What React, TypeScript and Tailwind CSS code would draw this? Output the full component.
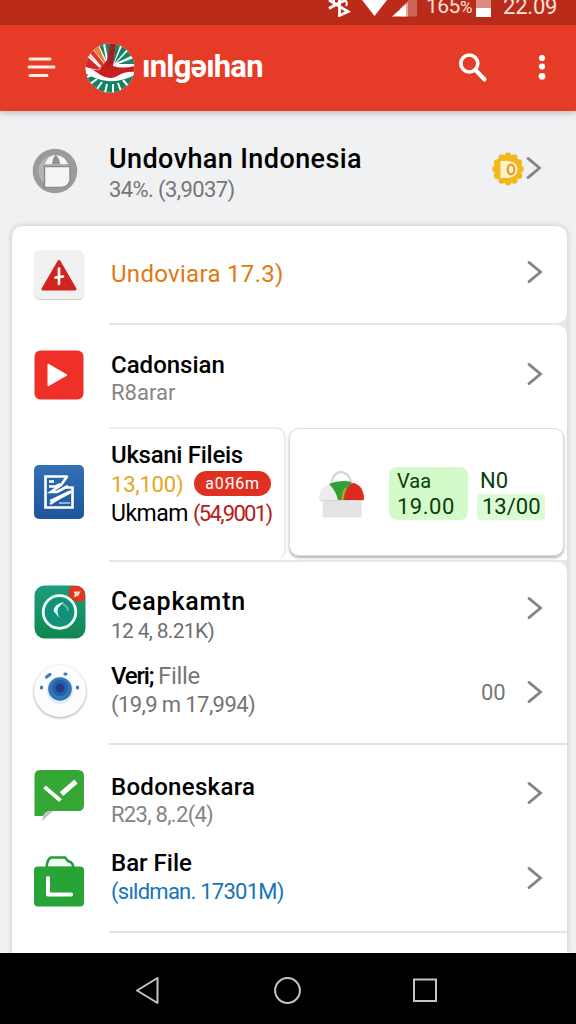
import React from 'react';

const Chevron: React.FC<{ className?: string }> = ({ className = '' }) => (
  <svg
    className={`w-4 h-6 shrink-0 ${className}`}
    viewBox="0 0 16 24"
    fill="none"
    stroke="#858585"
    strokeWidth="2.8"
    strokeLinecap="round"
    strokeLinejoin="miter"
  >
    <path d="M2 2.4 L13.5 12 L2 21.6" />
  </svg>
);

const StatusBar: React.FC = () => (
  <div className="h-[25px] shrink-0 bg-[#bb2b19] overflow-hidden flex items-start pl-[328px] text-[#fbe3dd]">
    <svg className="w-[89px] h-[17px] shrink-0" viewBox="0 0 89 17">
      <path
        d="M1 0 L20 11.500 L11.500 15.500 V0 M1 8.500 L9 4 L18 0"
        fill="none"
        stroke="#fff"
        strokeWidth="2.8"
      />
      <path d="M6 0 V7 M17 0 Q20 3 18 6" fill="none" stroke="#fff" strokeWidth="2" />
      <path d="M34 0 H59 L46.500 16 Z" fill="#fff" />
      <path d="M72 8 L81 0 H89 V16.500 H72 Z" fill="#cf6558" />
      <path d="M64 16.500 L78 4 V16.500 Z" fill="#fff" />
      <path d="M78 4 L80 2 V16.500 H78 Z" fill="#e6a79e" />
    </svg>
    <span className="ml-[9px] -mt-[6px] w-[50px] text-[21px] leading-6 tracking-[-0.5px] whitespace-nowrap">
      165<span className="text-[17px] tracking-[-1px]">%</span>
    </span>
    <span className="w-[15px] h-[17px] bg-[#dc8c80] flex items-end">
      <span className="w-full h-[9px] bg-white" />
    </span>
    <span className="ml-3 -mt-[5px] text-[22px] leading-6 tracking-[-0.2px]">22.09</span>
  </div>
);

const BrandLogo: React.FC = () => (
  <svg className="w-[50px] h-[50px] shrink-0" viewBox="0 0 50 50">
    <defs>
      <clipPath id="brand">
        <circle cx="25" cy="25" r="24.500" />
      </clipPath>
    </defs>
    <g clipPath="url(#brand)">
      <rect width="50" height="50" fill="#fff" />
      <path d="M0 30 Q12 37 23 38 Q36 39 50 32 V50 H0 Z" fill="#168463" />
      <g fill="#168463">
        <path d="M28 22 L31 0 H36 Z" />
        <path d="M29 21 L38 1 L43 5 Z" />
        <path d="M31 20 L44 7 L48 12 Z" />
        <path d="M33 21 L49 15 L50 21 Z" />
        <path d="M23 16 L20 0 H26 Z" />
        <path d="M21 17 L14 2 L18 1 Z" />
      </g>
      <path d="M20 20 L9 6 L13 4 Z" fill="#ef7c38" stroke="#ef7c38" strokeWidth="1.500" />
      <path d="M17 24 L5 10 L8 7 L19 21 Z" fill="#dd3425" />
      <path d="M0 12 L3 11 L16 24 L13 27 L0 24 Z" fill="#d42a20" />
      <path d="M3 13 L15 24" stroke="#fff" strokeWidth="2" />
      <path
        d="M0 24 Q10 28 14 27 L22 17 L25 0 H31 L28 23 Q37 26 50 23 V29 Q38 31 32 35 Q20 39 11 31 L0 26 Z"
        fill="#c91e20"
      />
      <path d="M26 0 H31 L28 19 L22 24 Z" fill="#992224" />
      <path
        d="M-1 25 Q7 27 15 33 Q25 39 33 34 Q40 29 51 30"
        fill="none"
        stroke="#fff"
        strokeWidth="2.400"
      />
      <path
        d="M5 41 L12 36 M12 46 L17 39 M20 50 L22 41 M28 50 L28 41 M36 48 L33 40 M43 43 L38 37 M2 34 L7 32"
        fill="none"
        stroke="#fff"
        strokeWidth="2"
      />
    </g>
  </svg>
);

const AppBar: React.FC = () => (
  <header className="h-[86px] shrink-0 bg-[#e63b26] flex items-start pl-[27px] shadow-[0_2px_7px_rgba(90,90,100,0.35)] text-white">
    <svg
      className="mt-[31px] w-[29px] h-6 shrink-0"
      viewBox="0 0 29 24"
      stroke="#ffe9e3"
      strokeWidth="3"
      strokeLinecap="round"
    >
      <path d="M3 3 H23 M2 11 H27 M3 19.500 H20" />
    </svg>
    <div className="ml-[29px] mt-[18px]">
      <BrandLogo />
    </div>
    <span className="ml-[7px] mt-[26px] w-[130px] text-[31px] leading-8 font-bold tracking-[-0.8px] whitespace-nowrap">
      ınlgəıhan
    </span>
    <svg
      className="ml-[186px] mt-[28px] w-[30px] h-[30px] shrink-0"
      viewBox="0 0 30 30"
      fill="none"
      stroke="#fff"
    >
      <circle cx="11.300" cy="10.500" r="8.500" strokeWidth="3.600" />
      <path d="M17.500 17 L26.500 26.500" strokeWidth="4.200" strokeLinecap="round" />
    </svg>
    <svg className="ml-[50px] mt-[29px] w-2 h-7 shrink-0" viewBox="0 0 8 28" fill="#fff">
      <circle cx="4" cy="4" r="3.100" />
      <circle cx="4" cy="12.500" r="3.100" />
      <circle cx="4" cy="22.300" r="3.400" />
    </svg>
  </header>
);

const AccountIcon: React.FC = () => (
  <svg className="w-[46px] h-[46px]" viewBox="0 0 46 46">
    <circle cx="23" cy="23" r="22.300" fill="#9b9b9b" />
    <circle cx="22" cy="23" r="15.500" fill="#b4b4b4" />
    <path d="M13 16 Q16 7 24 7 Q33 8 36 16 Z" fill="#f5f5f5" />
    <path d="M20 16 Q21 8 24 7 Q28 11 28 16 Z" fill="#929292" />
    <path
      d="M12.500 18.500 H38 V33 Q36 39.500 29 39.500 H12.500 Z"
      fill="#f5f5f5"
      stroke="#8c8c8c"
      strokeWidth="1.500"
    />
  </svg>
);

const CoinIcon: React.FC = () => (
  <svg className="w-8 h-[34px]" viewBox="0 0 32 34">
    <g fill="#f3b81e">
      <circle cx="16" cy="17" r="14" />
      {Array.from({ length: 12 }, (_, i) => (
        <circle
          key={i}
          cx={16 + 12.6 * Math.sin((i * Math.PI) / 6)}
          cy={17 - 13.3 * Math.cos((i * Math.PI) / 6)}
          r="3.200"
        />
      ))}
    </g>
    <path d="M8.500 9 H16 Q25.500 10 25.500 17 Q25.500 25 16 26 H8.500 Z" fill="#fff3c5" />
    <ellipse cx="19" cy="17.500" rx="3.300" ry="4.800" fill="none" stroke="#e39b35" strokeWidth="2.200" />
  </svg>
);

const AlertIcon: React.FC = () => (
  <div className="w-[50px] h-[49px] rounded-md bg-[#f1f1f1] shadow-[0_1px_1px_#ccc] flex items-center justify-center">
    <svg className="w-[38px] h-8" viewBox="0 0 38 32">
      <path
        d="M19 2.500 L35 30 H3 Z"
        fill="#d02421"
        stroke="#d02421"
        strokeWidth="3"
        strokeLinejoin="round"
      />
      <path
        d="M19 9.500 V25 M15.500 18.500 L23 17.500"
        stroke="#fff"
        strokeWidth="2.700"
        strokeLinecap="round"
      />
    </svg>
  </div>
);

const PlayIcon: React.FC = () => (
  <svg className="w-[50px] h-[50px]" viewBox="0 0 50 50">
    <rect x="0.500" y="0.500" width="49" height="49" rx="6" fill="#ee3028" />
    <path d="M14 14 L33 25 L14 36 Z" fill="#fff" stroke="#fff" strokeLinejoin="round" />
  </svg>
);

const DocumentIcon: React.FC = () => (
  <svg className="w-[50px] h-[54px]" viewBox="0 0 50 54">
    <defs>
      <linearGradient id="doc" x2="0" y2="1">
        <stop stopColor="#326fb3" />
        <stop offset="1" stopColor="#1e559c" />
      </linearGradient>
    </defs>
    <rect width="50" height="54" rx="5" fill="url(#doc)" />
    <g fill="none" stroke="#fff">
      <path d="M33.500 11.500 H11.500 V42.500 H38.500 V22.500 H30" strokeWidth="2.600" />
      <path d="M33.500 11 L27 20 L17 27 H23 L34 21" strokeWidth="2.600" />
      <path d="M15 16.500 H20 M15 21.500 H21 M20 22 L26 19 M16 36 L37 26" strokeWidth="2.400" />
      <path d="M16 39 L24 34 L37 27" strokeWidth="2.400" />
      <path d="M25 38 H36" stroke="#b8d1ec" strokeWidth="1.500" />
    </g>
  </svg>
);

const BasketIcon: React.FC = () => (
  <svg className="w-12 h-12 shrink-0" viewBox="0 0 48 48">
    <path
      d="M13 13 Q16 2 23 2 Q31 3 33 12"
      fill="none"
      stroke="#d8d8d8"
      strokeWidth="2.500"
    />
    <path d="M1 30 Q1 16 13 14 L24 30 Z" fill="#ededed" />
    <path d="M24 30 Q27 13 36 13 Q46 16 46 30 Z" fill="#dd2920" />
    <path d="M11 14 Q21 9 34 12 Q28 18 26 30 H20 Q18 21 11 14 Z" fill="#2fa138" />
    <path d="M24.500 30 Q25 21 28 18" stroke="#ed8e2c" strokeWidth="2" fill="none" />
    <rect x="4.500" y="31" width="39" height="16.500" rx="1.500" fill="#e4e4e6" />
    <path d="M2 30.500 H45" stroke="#d4d4d6" />
  </svg>
);

const TealIcon: React.FC = () => (
  <svg className="w-[52px] h-[54px]" viewBox="0 0 52 54">
    <defs>
      <linearGradient id="teal" x2="0" y2="1">
        <stop stopColor="#1b9d7e" />
        <stop offset="1" stopColor="#118650" />
      </linearGradient>
    </defs>
    <rect x="0.500" y="0.500" width="51" height="53" rx="10" fill="url(#teal)" />
    <circle cx="25.500" cy="27" r="16.300" fill="#139078" stroke="#effff8" strokeWidth="2.800" />
    <path d="M30 17 Q20 19 19.500 26 L25.500 33 Q22 26 24.500 22.500 Z" fill="#e2fff5" />
    <path d="M29 19 Q34 22 34 26" stroke="#5fc0a4" strokeWidth="1.800" fill="none" />
    <path d="M37 1 H42 Q51 1 51 11 V15 Q45 19 39 15 Q31 9 37 1 Z" fill="#e2361f" />
    <path d="M40 7.500 H45 L43 11 M42 8 L41 12" stroke="#ffd7c9" strokeWidth="1.900" fill="none" />
  </svg>
);

const CameraIcon: React.FC = () => (
  <div className="w-[52px] h-[52px] rounded-full bg-[#fdfdfd] shadow-[0_1px_3px_rgba(0,0,0,0.35)]">
    <svg className="w-[52px] h-[52px]" viewBox="0 0 52 52">
      <circle cx="26" cy="25.500" r="13.500" fill="#e4edf5" />
      <circle cx="26" cy="24" r="11.800" fill="#2f77b8" />
      <circle cx="26" cy="23" r="8" fill="#2460a7" />
      <circle cx="26" cy="23" r="4.500" fill="#263b82" />
      <g stroke="#3c7cba" strokeWidth="3.200" strokeLinecap="round">
        <path d="M12.500 12 L16 9.500 M7.500 22 V23 M43.500 22 V23 M31 9 L32 9" />
      </g>
    </svg>
  </div>
);

const ChatIcon: React.FC = () => (
  <svg className="w-[50px] h-[53px]" viewBox="0 0 50 53">
    <path d="M14 42 Q9 45 8 52 L19 42 Z" fill="#bcc3bc" />
    <path
      d="M6 1 H44 Q50 1 50 7 V36 Q50 42 44 42 H14 Q11 43 9 47 H0.500 V7 Q0.500 1 6 1 Z"
      fill="#35a735"
    />
    <path d="M10.500 18 L26.500 31.500" stroke="#fff" strokeWidth="3.800" />
    <path d="M27.500 25 L42 12.500" stroke="#fff" strokeWidth="5" />
  </svg>
);

const BagIcon: React.FC = () => (
  <svg className="w-[50px] h-[51px]" viewBox="0 0 50 51">
    <path
      d="M12.500 12 Q13 3 17 1.500 H31 L34 5 Q39 6 39.500 12 Z"
      fill="#f4fff4"
      stroke="#27993b"
      strokeWidth="2.600"
    />
    <rect y="10.500" width="50" height="40" rx="4" fill="#27a436" />
    <path
      d="M14 22 V38.500 H37"
      fill="none"
      stroke="#fff"
      strokeWidth="4"
      strokeLinecap="round"
      strokeLinejoin="round"
    />
  </svg>
);

const App: React.FC = () => {
  return (
    <div className="w-[576px] h-[1024px] overflow-hidden flex flex-col bg-[#f0f1f2] font-['Roboto','Noto_Sans',sans-serif] text-black whitespace-nowrap">
      <StatusBar />
      <AppBar />

      <section className="h-[115px] shrink-0 flex items-start pl-8">
        <div className="mt-[37px] w-[77px]">
          <AccountIcon />
        </div>
        <div className="mt-[33px] w-[383px]">
          <h1 className="text-[27px] leading-[30px] font-medium tracking-[0.4px]">
            Undovhan Indonesia
          </h1>
          <p className="mt-[3px] text-[22px] leading-[26px] tracking-[-0.6px] text-[#777]">
            34%. (3,9037)
          </p>
        </div>
        <div className="mt-[41px] w-[34px]">
          <CoinIcon />
        </div>
        <Chevron className="mt-[45px]" />
      </section>

      <main className="ml-3 w-[555px] h-[727px] shrink-0 rounded-t-[10px] bg-[#e6e7e8] shadow-[0_0_6px_rgba(0,0,0,0.18)] overflow-clip">
        <section className="h-[97px] flex items-start pl-[22px] rounded-[10px] rounded-bl-none bg-white">
          <div className="mt-6 w-[77px]">
            <AlertIcon />
          </div>
          <p className="mt-[34px] w-[416px] text-[24px] leading-7 tracking-[0.3px] text-[#e27813]">
            Undoviara 17.3)
          </p>
          <Chevron className="mt-[34px]" />
        </section>
        <div className="h-0.5 flex">
          <div className="w-[97px] bg-white" />
        </div>

        <section className="h-[102px] flex items-start pl-[22px] rounded-tr-[10px] bg-white">
          <div className="mt-[25px] w-[77px]">
            <PlayIcon />
          </div>
          <div className="mt-[26px] w-[416px]">
            <h2 className="text-[24px] leading-7 font-medium">Cadonsian</h2>
            <p className="mt-px text-[22px] leading-[26px] text-[#858585]">R8arar</p>
          </div>
          <Chevron className="mt-[37px]" />
        </section>

        <section className="h-[133px] flex bg-white">
          <div className="w-[97px] pl-[22px] pt-[38px]">
            <DocumentIcon />
          </div>
          <div className="w-[177px] h-[133px] border-t-2 border-r-2 border-[#ebecee] rounded-r-[10px] pl-[2px] pt-3">
            <h2 className="text-[24px] leading-7 font-medium tracking-[-0.3px]">Uksani Fileis</h2>
            <div className="flex h-7 items-center">
              <span className="w-[83px] pt-[3px] text-[22px] leading-7 tracking-[-0.2px] text-[#e9a51d]">
                13,100)
              </span>
              <span className="w-[77px] h-[25px] rounded-full bg-[#df3022] text-white text-[16px] leading-[26px] tracking-[0.7px] text-center">
                a0Я6m
              </span>
            </div>
            <p className="mt-[3px] flex text-[23px] leading-7">
              <span className="w-[82px] tracking-[-0.5px]">Ukmam</span>
              <span className="text-[22px] tracking-[-1.7px] text-[#b32018]">(54,9001)</span>
            </p>
          </div>
          <div className="ml-[3px] mt-px w-[275px] h-[128px] border border-[#dcdee0] rounded-[10px] shadow-[0_2px_3px_rgba(0,0,0,0.3)] flex items-start pl-[28px] pt-[38px] bg-white">
            <div className="mt-[3px] w-[71px]">
              <BasketIcon />
            </div>
            <div className="w-[79px] h-[53px] rounded-lg bg-[#d3fac8] pl-2 text-[#07400c]">
              <p className="text-[20px] leading-7">Vaa</p>
              <p className="text-[22px] leading-6 tracking-[0.5px]">19.00</p>
            </div>
            <div className="ml-[9px] w-[68px] text-[#063d0b]">
              <p className="pl-[3px] text-[22px] leading-[27px]">N0</p>
              <p className="rounded bg-[#dcfad6] pl-[5px] text-[22px] leading-[26px]">13/00</p>
            </div>
          </div>
        </section>
        <div className="h-0.5 flex">
          <div className="w-[97px] bg-white" />
        </div>

        <section className="h-[181px] pl-[22px] rounded-tr-[10px] bg-white">
          <div className="h-[91px] flex items-start">
            <div className="mt-[23px] w-[77px]">
              <TealIcon />
            </div>
            <div className="mt-[26px] w-[416px]">
              <h2 className="text-[25px] leading-7 font-medium tracking-[0.8px]">Ceapkamtn</h2>
              <p className="mt-0.5 text-[21px] leading-[26px] tracking-[-0.7px] text-[#707070]">
                12 4, 8.21K)
              </p>
            </div>
            <Chevron className="mt-[34px]" />
          </div>
          <div className="h-[90px] flex items-start">
            <div className="mt-[12px] w-[77px]">
              <CameraIcon />
            </div>
            <div className="mt-[9px] w-[370px]">
              <h2 className="flex text-[24px] leading-7">
                <span className="w-[47px] font-medium tracking-[-1.2px]">Veri;</span>
                <span className="tracking-[-0.3px] text-[#777]">Fille</span>
              </h2>
              <p className="mt-0.5 text-[22px] leading-[26px] tracking-[-0.6px] text-[#747474]">
                (19,9 m 17,994)
              </p>
            </div>
            <span className="mt-[27px] w-[46px] text-[22px] leading-[26px] text-[#777]">00</span>
            <Chevron className="mt-[27px]" />
          </div>
        </section>

        <section className="h-[188px] bg-white">
          <div className="ml-[97px] h-0.5 bg-[#e2e2e6]" />
          <div className="h-[86px] flex items-start pl-[22px]">
            <div className="mt-6 w-[77px]">
              <ChatIcon />
            </div>
            <div className="mt-[28px] w-[416px]">
              <h2 className="text-[24px] leading-7 font-medium tracking-[0.3px]">Bodoneskara</h2>
              <p className="mt-px text-[22px] leading-[26px] tracking-[-0.7px] text-[#858585]">
                R23, 8,.2(4)
              </p>
            </div>
            <Chevron className="mt-[36px]" />
          </div>
          <div className="h-[100px] flex items-start pl-[22px]">
            <div className="mt-[25px] w-[77px]">
              <BagIcon />
            </div>
            <div className="mt-[18px] w-[416px]">
              <h2 className="text-[24px] leading-7 font-medium">Bar File</h2>
              <p className="mt-0.5 text-[22px] leading-[26px] tracking-[-0.75px] text-[#1674b9]">
                (sıldman. 17301M)
              </p>
            </div>
            <Chevron className="mt-[35px]" />
          </div>
        </section>
        <div className="h-[22px] bg-white">
          <div className="ml-[97px] h-0.5 bg-[#e4e5e6]" />
        </div>
      </main>

      <nav className="h-[71px] shrink-0 relative bg-black pt-[19px] pl-[134px]">
        <svg
          className="w-[306px] h-9"
          viewBox="0 0 306 36"
          fill="none"
          stroke="#c4c4c4"
          strokeWidth="2"
        >
          <path d="M3 18.500 L23.500 6 V31 Z" strokeLinejoin="round" />
          <circle cx="153.500" cy="18.500" r="12.400" />
          <rect x="280" y="7.500" width="22" height="21.500" />
        </svg>
      </nav>
    </div>
  );
};

export default App;
